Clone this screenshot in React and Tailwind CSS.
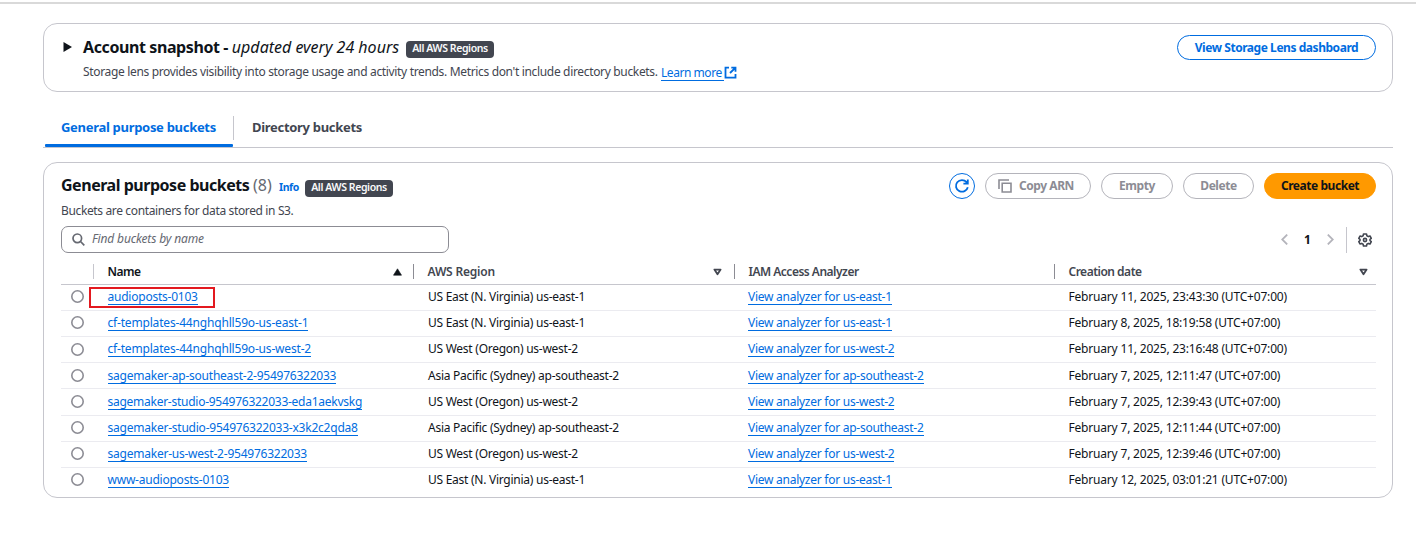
const link = 'text-[#006ce0]';

const buckets = [
  { name: 'audioposts-0103', region: 'US East (N. Virginia) us-east-1', code: 'us-east-1', date: 'February 11, 2025, 23:43:30 (UTC+07:00)', marked: true },
  { name: 'cf-templates-44nghqhll59o-us-east-1', region: 'US East (N. Virginia) us-east-1', code: 'us-east-1', date: 'February 8, 2025, 18:19:58 (UTC+07:00)', tracking: 'tracking-[-0.18px]' },
  { name: 'cf-templates-44nghqhll59o-us-west-2', region: 'US West (Oregon) us-west-2', code: 'us-west-2', date: 'February 11, 2025, 23:16:48 (UTC+07:00)', radio: 'mt-[6px]', tracking: 'tracking-[-0.18px]' },
  { name: 'sagemaker-ap-southeast-2-954976322033', region: 'Asia Pacific (Sydney) ap-southeast-2', code: 'ap-southeast-2', date: 'February 7, 2025, 12:11:47 (UTC+07:00)', row: 'h-[26px] pt-[1px]' },
  { name: 'sagemaker-studio-954976322033-eda1aekvskg', region: 'US West (Oregon) us-west-2', code: 'us-west-2', date: 'February 7, 2025, 12:39:43 (UTC+07:00)', row: 'h-[27px] pt-[1px]', tracking: 'tracking-[-0.26px]' },
  { name: 'sagemaker-studio-954976322033-x3k2c2qda8', region: 'Asia Pacific (Sydney) ap-southeast-2', code: 'ap-southeast-2', date: 'February 7, 2025, 12:11:44 (UTC+07:00)' },
  { name: 'sagemaker-us-west-2-954976322033', region: 'US West (Oregon) us-west-2', code: 'us-west-2', date: 'February 7, 2025, 12:39:46 (UTC+07:00)' },
  { name: 'www-audioposts-0103', region: 'US East (N. Virginia) us-east-1', code: 'us-east-1', date: 'February 12, 2025, 03:01:21 (UTC+07:00)' },
];

const grid = 'grid grid-cols-[32px_320px_321px_320px_1fr]';

function Badge() {
  return (
    <span className="flex h-[17px] w-[88px] items-center justify-center rounded-[4px] bg-[#424650] text-[10.5px] font-semibold tracking-[-0.4px] whitespace-nowrap text-[#f9f9fa]">
      All AWS Regions
    </span>
  );
}

function Button({ children, className }) {
  return (
    <button className={'flex items-center justify-center rounded-full border text-[12px] font-bold tracking-[-0.45px] whitespace-nowrap ' + className}>
      {children}
    </button>
  );
}

function SortIcon({ active }) {
  return active ? (
    <svg width="9" height="8" viewBox="0 0 9 8">
      <path d="M4.5 0.8 8.5 7.2H0.5Z" fill="#0f141a" stroke="#0f141a" strokeWidth="0.6" strokeLinejoin="round" />
    </svg>
  ) : (
    <svg width="9" height="8" viewBox="0 0 9 8">
      <path d="M1.4 1.6H7.6L4.5 6.3Z" fill="none" stroke="#424650" strokeWidth="1.8" strokeLinejoin="round" />
    </svg>
  );
}

function HeaderCell({ label, sort, dark, className = '', tracking = 'tracking-[-0.5px]' }) {
  return (
    <div className={'flex h-[15px] items-center border-l pl-[13.5px] ' + className}>
      <span className={'flex-1 text-[12px] font-semibold ' + tracking + (dark ? ' text-[#0f141a]' : ' text-[#424650]')}>{label}</span>
      {sort && <SortIcon active={sort === 'asc'} />}
    </div>
  );
}

function Link({ children, className = '' }) {
  return (
    <a className={'block h-[15px] border-b border-[#006ce0] leading-[13px] whitespace-nowrap ' + link + ' ' + className}>
      {children}
    </a>
  );
}

function Row({ bucket, last }) {
  return (
    <div className={grid + ' items-start text-[12px] leading-[13px] text-[#0f141a] ' + (bucket.row || 'h-[26px]') + (last ? '' : ' border-b border-[#ebebf0]')}>
      <svg className={'ml-[10px] ' + (bucket.radio || 'mt-[5px]')} width="13" height="13" viewBox="0 0 13 13">
        <circle cx="6.5" cy="6.5" r="5.7" fill="#fff" stroke="#8c8c94" strokeWidth="1.6" />
      </svg>
      <div className="relative flex pt-[5px] pl-[14.5px]">
        {bucket.marked && <span className="absolute top-[2px] -left-[4px] h-[21px] w-[126px] border-2 border-[#e3191f]" />}
        <Link className={bucket.tracking || 'tracking-[-0.23px]'}>{bucket.name}</Link>
      </div>
      <span className="pt-[5px] pl-[15px] tracking-[-0.26px] whitespace-nowrap">{bucket.region}</span>
      <div className="flex pt-[5px] pl-[14px]">
        <Link className="tracking-[-0.26px]">View analyzer for {bucket.code}</Link>
      </div>
      <span className="pt-[5px] pl-[14.5px] tracking-[-0.19px] whitespace-nowrap">{bucket.date}</span>
    </div>
  );
}

export default function App() {
  return (
    <div className="h-[537px] overflow-hidden bg-white pt-[2px] font-['Noto_Sans','Open_Sans',sans-serif] text-[#0f141a]">
      <div className="h-[2px] bg-[#d9d9d9]" />
      <main className="mt-[19px] mr-[23px] ml-[43px]">
        <section className="flex h-[69px] items-start rounded-[14px] border border-[#c6c6cd] pr-[16px]">
          <svg className="mt-[18px] ml-[19px]" width="10" height="10" viewBox="0 0 10 10">
            <path d="M0.5 0 9 5 0.5 10Z" fill="#0f141a" />
          </svg>
          <div className="ml-[10px] flex-1">
            <div className="mt-[11px] flex h-[24px] items-center">
              <h2 className="w-[316px] text-[16px] font-bold tracking-[-0.4px] whitespace-nowrap">
                Account snapshot - <span className="font-normal tracking-normal italic">updated every 24 hours</span>
              </h2>
              <span className="mt-[4px] ml-[7px]"><Badge /></span>
            </div>
            <div className="mt-[5px] flex h-[16px] items-center text-[12px] text-[#424650]">
              <span className="w-[578px] tracking-[-0.335px] whitespace-nowrap">Storage lens provides visibility into storage usage and activity trends. Metrics don't include directory buckets.</span>
              <Link className="mt-[2px] w-[63px] tracking-[-0.45px]">Learn more</Link>
              <svg width="13" height="13" viewBox="0 0 13 13" fill="none" stroke="#006ce0" strokeWidth="1.8">
                <path d="M5 1.6H1.5V11.6H11.5V8M7.3 1.6H11.5V5.7M11.5 1.6 6 7" />
              </svg>
            </div>
          </div>
          <Button className="mt-[11px] h-[25px] w-[199px] border-[#006ce0] text-[#006ce0]">View Storage Lens dashboard</Button>
        </section>

        <nav className="mt-[24px] flex h-[32px] border-b border-[#c6c6cd] text-[13px] font-bold tracking-[-0.3px]">
          <div className="ml-[2px] flex w-[188px] flex-col">
            <span className="h-[24px] pl-[16px] leading-[23px] whitespace-nowrap text-[#006ce0]">General purpose buckets</span>
            <span className="mt-[4px] h-[3px] rounded-[1px] bg-[#006ce0]" />
          </div>
          <span className="h-[24px] border-l border-[#c6c6cd] pl-[18px] leading-[23px] text-[#424650]">Directory buckets</span>
        </nav>

        <section className="mt-[14px] h-[336px] rounded-[14px] border border-[#c6c6cd] pt-[10px] pr-[16px] pl-[17px]">
          <div className="flex h-[26px] items-center">
            <h2 className="-mt-[2px] w-[211px] text-[16px] font-bold tracking-[-0.47px] whitespace-nowrap">
              General purpose buckets <span className="font-normal tracking-normal text-[#656871]">(8)</span>
            </h2>
            <span className={'mt-[4px] ml-[7px] w-[20px] text-[10.5px] font-bold tracking-[-0.4px] ' + link}>Info</span>
            <span className="mt-[4px] ml-[6px]"><Badge /></span>
            <div className="ml-auto flex gap-[10px]">
              <Button className="h-[26px] w-[26px] border-[#006ce0] text-[#006ce0]">
                <svg width="16" height="16" viewBox="0 0 16 16" fill="none" stroke="currentColor" strokeWidth="1.8">
                  <path d="M13.8 9.2A6 5.8 0 1 1 12.6 4.2L13.6 5.4M13.8 1.4V5.7H9.4" />
                </svg>
              </Button>
              <Button className="h-[26px] w-[106px] border-[#b4b4bb] pr-[4px] text-[#8c8c94]">
                <svg className="mr-[7px]" width="14" height="14" viewBox="0 0 14 14" fill="none" stroke="currentColor" strokeWidth="1.6">
                  <path d="M1 10V1H11M4.2 4.2H13V13H4.2Z" />
                </svg>
                Copy ARN
              </Button>
              <Button className="h-[26px] w-[72px] border-[#b4b4bb] text-[#8c8c94]">Empty</Button>
              <Button className="h-[26px] w-[71px] border-[#b4b4bb] text-[#8c8c94]">Delete</Button>
              <Button className="h-[26px] w-[112px] border-[#ff9900] bg-[#ff9900]">Create bucket</Button>
            </div>
          </div>
          <p className="mt-[4px] h-[16px] text-[12px] leading-[16px] tracking-[-0.36px] text-[#424650]">Buckets are containers for data stored in S3.</p>

          <div className="mt-[7px] flex h-[27px] items-center">
            <div className="flex h-[27px] w-[388px] items-center rounded-[7px] border border-[#8c8c94] pl-[10px]">
              <svg width="13" height="13" viewBox="0 0 13 13" fill="none" stroke="#656871" strokeWidth="1.7">
                <circle cx="5.3" cy="5.3" r="4.3" />
                <path d="M8.5 8.5 12.3 12.3" />
              </svg>
              <span className="-mt-[1px] ml-[7px] text-[12px] tracking-[-0.15px] text-[#656871] italic">Find buckets by name</span>
            </div>
            <div className="ml-auto flex h-[26px] items-center">
              <svg width="7" height="11" viewBox="0 0 7 11" fill="none" stroke="#b4b4bb" strokeWidth="1.8"><path d="M6.2 0.6 1.2 5.5 6.2 10.4" /></svg>
              <span className="mx-[16px] w-[7px] text-center text-[12px] font-bold">1</span>
              <svg width="7" height="11" viewBox="0 0 7 11" fill="none" stroke="#b4b4bb" strokeWidth="1.8"><path d="M0.8 0.6 5.8 5.5 0.8 10.4" /></svg>
              <span className="ml-[12px] flex h-[26px] items-center border-l border-[#c6c6cd] pr-[4px] pl-[11px]">
                <svg width="14" height="14" viewBox="0 0 14 14" fill="none" stroke="#424650" strokeWidth="1.6" strokeLinejoin="round">
                  <path d="M5.5 1H8.5L8.9 2.8 10.3 3.6 12 3 13.3 5.4 12 6.4V7.6L13.3 8.6 12 11 10.3 10.4 8.9 11.2 8.5 13H5.5L5.1 11.2 3.7 10.4 2 11 0.8 8.6 2 7.6V6.4L0.8 5.4 2 3 3.7 3.6 5.1 2.8Z" />
                  <circle cx="7" cy="7" r="1.6" />
                </svg>
              </span>
            </div>
          </div>

          <div className={grid + ' mt-[6px] h-[26px] items-center border-b border-[#c6c6cd]'}>
            <span />
            <HeaderCell label="Name" sort="asc" dark className="border-[#c6c6cd] pr-[11px]" />
            <HeaderCell label="AWS Region" sort="none" className="border-[#8c8c94] pr-[12px]" tracking="tracking-[-0.2px]" />
            <HeaderCell label="IAM Access Analyzer" className="border-[#8c8c94]" />
            <HeaderCell label="Creation date" sort="none" className="border-[#8c8c94] pr-[8px]" />
          </div>
          {buckets.map((bucket, i) => (
            <Row key={bucket.name} bucket={bucket} last={i === buckets.length - 1} />
          ))}
        </section>
      </main>
    </div>
  );
}
